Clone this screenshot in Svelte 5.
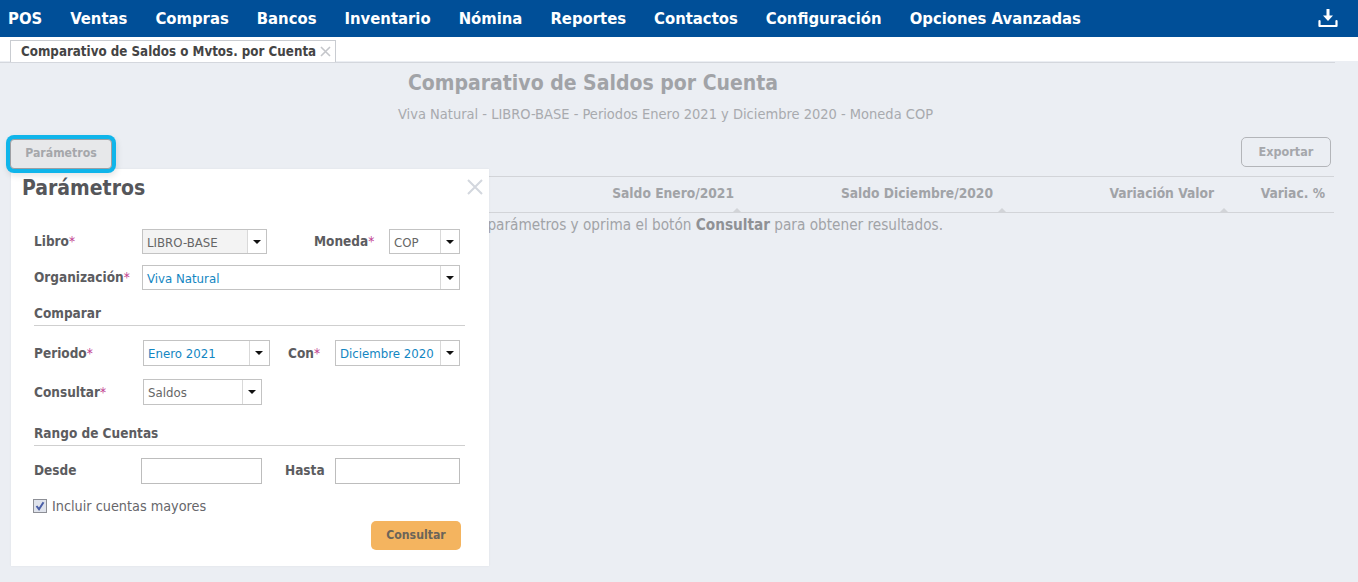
<script>
  const menu = ['POS', 'Ventas', 'Compras', 'Bancos', 'Inventario', 'Nómina', 'Reportes', 'Contactos', 'Configuración', 'Opciones Avanzadas'];
</script>

<div class="page">
  <nav class="topbar">
    {#each menu as item}
      <span class="menu-item">{item}</span>
    {/each}
    <svg class="download" width="20" height="20" viewBox="0 0 20 20" fill="none" aria-hidden="true">
      <path d="M8.5 1h3v6.5H15L10 13 5 7.5h3.5z" fill="#fff" />
      <path d="M1.5 13v5h17v-5" stroke="#fff" stroke-width="2.2" stroke-linecap="round" stroke-linejoin="round" />
    </svg>
  </nav>

  <div class="tabstrip">
    <div class="tab">
      <span>Comparativo de Saldos o Mvtos. por Cuenta</span>
      <svg class="tab-close" width="11" height="11" viewBox="0 0 11 11"><path d="M1 1l9 9M10 1l-9 9" stroke="#c4c6ca" stroke-width="1.6" /></svg>
    </div>
  </div>

  <main class="content">
    <h1>Comparativo de Saldos por Cuenta</h1>
    <p class="subtitle">Viva Natural - LIBRO-BASE - Periodos Enero 2021 y Diciembre 2020 - Moneda COP</p>

    <div class="toolbar">
      <button class="btn-params">Parámetros</button>
      <button class="btn-export">Exportar</button>
    </div>

    <div class="table-head">
      <span class="col col-a sorted">Saldo Enero/2021</span>
      <span class="col col-b sorted">Saldo Diciembre/2020</span>
      <span class="col col-c sorted">Variación Valor</span>
      <span class="col col-d">Variac. %</span>
    </div>
    <p class="empty">Seleccione los parámetros y oprima el botón <b>Consultar</b> para obtener resultados.</p>

    <section class="popup">
      <button class="popup-close" aria-label="Cerrar">
        <svg width="16" height="16" viewBox="0 0 16 16"><path d="M1 1l14 14M15 1L1 15" stroke="#d3d7de" stroke-width="2" /></svg>
      </button>
      <h2>Parámetros</h2>

      <div class="row r-libro">
        <label class="lbl w-108">Libro<i>*</i></label>
        <div class="select disabled w-125"><span>LIBRO-BASE</span><em></em></div>
        <label class="lbl ml-47 w-75">Moneda<i>*</i></label>
        <div class="select w-71"><span>COP</span><em></em></div>
      </div>

      <div class="row r-org">
        <label class="lbl w-108">Organización<i>*</i></label>
        <div class="select w-318"><span class="blue">Viva Natural</span><em></em></div>
      </div>

      <h3 class="h-comparar">Comparar</h3>

      <div class="row r-periodo">
        <label class="lbl w-109">Periodo<i>*</i></label>
        <div class="select tall w-127"><span class="blue">Enero 2021</span><em class="e-20"></em></div>
        <label class="lbl ml-18 w-47">Con<i>*</i></label>
        <div class="select tall w-125"><span class="blue">Diciembre 2020</span><em></em></div>
      </div>

      <div class="row r-consultar">
        <label class="lbl w-109">Consultar<i>*</i></label>
        <div class="select tall w-119"><span>Saldos</span><em></em></div>
      </div>

      <h3 class="h-rango">Rango de Cuentas</h3>

      <div class="row r-desde">
        <label class="lbl w-107">Desde</label>
        <input class="w-121" type="text" />
        <label class="lbl ml-23 w-50">Hasta</label>
        <input class="w-125" type="text" />
      </div>

      <div class="check">
        <svg width="14" height="14" viewBox="0 0 14 14">
          <rect x="0.5" y="0.5" width="13" height="13" fill="#dfe3ec" stroke="#8d8f96" />
          <path d="M3.5 7l2.5 3.2L10.5 3.2" fill="none" stroke="#4a5fa8" stroke-width="2" />
        </svg>
        <span>Incluir cuentas mayores</span>
      </div>

      <div class="actions">
        <button class="btn-run">Consultar</button>
      </div>
    </section>
  </main>
</div>

<style>
  :global(body) {
    margin: 0;
    background: #ebeef3;
  }

  .page {
    height: 582px;
    overflow: hidden;
    font-family: "DejaVu Sans Condensed", "DejaVu Sans", sans-serif;
    font-size: 14px;
    color: #5c5c5c;
  }

  .topbar {
    height: 37px;
    background: #004f98;
    display: flex;
    align-items: center;
    padding-left: 8px;
    gap: 28px;
    position: relative;
  }

  .menu-item {
    color: #fff;
    font-size: 16.5px;
    font-weight: 700;
  }

  .download {
    margin-left: auto;
    margin-right: 20px;
    margin-top: -1px;
  }

  .tabstrip {
    height: 24px;
    background: #fff;
    padding: 3px 0 0 10px;
    box-sizing: border-box;
    position: relative;
  }

  .tab {
    width: 326px;
    height: 22px;
    box-sizing: border-box;
    border: 1px solid #c9ccd1;
    border-bottom: none;
    background: #fff;
    padding-left: 10px;
    display: flex;
    align-items: center;
    font-size: 13.25px;
    font-weight: 700;
    color: #444;
    white-space: nowrap;
    position: relative;
    z-index: 1;
  }

  .tab-close {
    margin-left: 4px;
    flex-shrink: 0;
  }

  .content {
    position: relative;
    height: 521px;
    border-top: 1px solid transparent;
    box-sizing: border-box;
    padding-right: 23px;
    background: linear-gradient(#d4d7dd, #d4d7dd) no-repeat 0 0 / 1335px 1px;
  }

  h1 {
    margin: 0;
    padding-top: 8px;
    width: 1186px;
    text-align: center;
    font-size: 21px;
    line-height: 27px;
    font-weight: 700;
    color: #a1a3a7;
  }

  .subtitle {
    margin: 7px 0 0;
    width: 1331px;
    text-align: center;
    font-size: 14.5px;
    line-height: 20px;
    color: #a8aaae;
  }

  .toolbar {
    display: flex;
    justify-content: space-between;
    align-items: flex-start;
    margin-top: 13px;
    padding: 0 4px 0 10px;
  }

  .btn-params {
    width: 102px;
    height: 30px;
    margin-top: 2px;
    padding: 0 0 3px;
    border: 1px solid #9d9fa3;
    border-radius: 4px;
    background: #e7e8ea;
    box-shadow: 0 0 0 4px #10b5ea, 1px 3px 6px 4px rgba(0, 0, 0, 0.1);
    font: 700 12.2px "DejaVu Sans Condensed", "DejaVu Sans", sans-serif;
    color: #a5a7ab;
    position: relative;
    z-index: 2;
  }

  .btn-export {
    width: 90px;
    height: 30px;
    padding: 0 0 2px;
    border: 1px solid #b3b5b9;
    border-radius: 5px;
    background: transparent;
    font: 700 12.5px "DejaVu Sans Condensed", "DejaVu Sans", sans-serif;
    color: #a5a7ab;
  }

  .table-head {
    margin: 7px 0 0 489px;
    width: 845px;
    height: 37px;
    box-sizing: border-box;
    border-top: 1px solid #d2d4d8;
    border-bottom: 1px solid #d2d4d8;
    display: flex;
    align-items: flex-start;
    font-size: 13.7px;
    font-weight: 700;
    color: #a1a3a7;
  }

  .col {
    position: relative;
    text-align: right;
    height: 35px;
    line-height: 32px;
    box-sizing: border-box;
  }

  .col-a { width: 245px; }
  .col-b { width: 259px; }
  .col-c { width: 221px; }
  .col-d { width: 111px; }

  .sorted::after {
    content: '';
    position: absolute;
    right: -13px;
    bottom: 0;
    border: 4px solid transparent;
    border-top: none;
    border-bottom-color: #d2d4d8;
  }

  .col-a.sorted::after { right: -7px; }
  .col-c.sorted::after { right: -14px; }

  .empty {
    margin: 2px 0 0;
    width: 943px;
    text-align: right;
    font-size: 15.2px;
    line-height: 20px;
    white-space: nowrap;
    color: #a1a3a7;
  }

  .empty b { font-weight: 700; color: #8f9195; }

  .popup {
    position: absolute;
    left: 11px;
    top: 107px;
    width: 478px;
    height: 397px;
    box-sizing: border-box;
    background: #fff;
    padding: 0 23px;
    box-shadow: 0 0 2px rgba(0, 0, 0, 0.06);
  }

  .popup-close {
    position: absolute;
    right: 6px;
    top: 10px;
    padding: 0;
    border: none;
    background: none;
    line-height: 0;
  }

  h2 {
    margin: 0 0 0 -12px;
    padding-top: 6px;
    font-size: 21px;
    line-height: 27px;
    font-weight: 700;
    color: #55565a;
  }

  .row {
    display: flex;
    align-items: center;
  }

  .r-libro { margin-top: 27px; }
  .r-org { margin-top: 11px; }
  .r-periodo { margin-top: 14px; }
  .r-consultar { margin-top: 13px; }
  .r-desde { margin-top: 12px; }

  .lbl {
    font-size: 13.5px;
    font-weight: 700;
    color: #5c5c60;
    white-space: nowrap;
  }

  .r-libro .lbl, .r-org .lbl, .r-desde .lbl {
    position: relative;
    top: -1px;
  }

  .lbl i {
    color: #c2418f;
    font-style: normal;
    font-weight: 400;
  }

  .w-50 { width: 50px; }
  .w-47 { width: 47px; }
  .w-71 { width: 71px; }
  .w-75 { width: 75px; }
  .w-107 { width: 107px; }
  .w-108 { width: 108px; }
  .w-109 { width: 109px; }
  .w-119 { width: 119px; }
  .w-121 { width: 121px; }
  .w-125 { width: 125px; }
  .w-127 { width: 127px; }
  .w-318 { width: 318px; }
  .ml-18 { margin-left: 18px; }
  .ml-23 { margin-left: 23px; }
  .ml-47 { margin-left: 47px; }

  .select {
    height: 25px;
    box-sizing: border-box;
    border: 1px solid #c3c3c3;
    background: #fff;
    display: flex;
    align-items: center;
    font-size: 13.1px;
    color: #666;
    flex-shrink: 0;
  }

  .select.tall { height: 26px; }
  .select.disabled span { background: #f3f3f3; }

  .select span {
    flex: 1;
    height: 100%;
    padding-left: 4px;
    line-height: 25px;
    overflow: hidden;
    white-space: nowrap;
  }

  .select.tall span { line-height: 26px; }
  .select .blue { color: #1386c2; }

  .select em {
    width: 19px;
    height: 100%;
    box-sizing: border-box;
    border-left: 1px solid #d9d9d9;
    position: relative;
    flex-shrink: 0;
  }

  .select em.e-20 { width: 20px; }

  .select em::after {
    content: '';
    position: absolute;
    left: 5px;
    top: 10px;
    border: 4px solid transparent;
    border-bottom: none;
    border-top: 4px solid #111;
  }

  h3 {
    margin: 0;
    font-size: 13.5px;
    line-height: 18px;
    font-weight: 700;
    color: #5c5c60;
    border-bottom: 1px solid #cfcfcf;
    width: 431px;
    padding-bottom: 3px;
  }

  .h-comparar { margin-top: 14px; }
  .h-rango { margin-top: 19px; }

  input {
    height: 26px;
    box-sizing: border-box;
    border: 1px solid #bdbdbd;
    background: #fff;
    padding: 0 4px;
    flex-shrink: 0;
  }

  .check {
    display: flex;
    align-items: center;
    gap: 5px;
    margin: 14px 0 0 -1px;
    font-size: 14.3px;
    color: #66666a;
  }

  .actions {
    display: flex;
    justify-content: flex-end;
    width: 427px;
    margin-top: 7px;
  }

  .btn-run {
    width: 90px;
    height: 29px;
    padding: 0 0 2px;
    border: none;
    border-radius: 5px;
    background: #f4b45f;
    font: 700 12.2px "DejaVu Sans Condensed", "DejaVu Sans", sans-serif;
    color: #6b6459;
  }
</style>
